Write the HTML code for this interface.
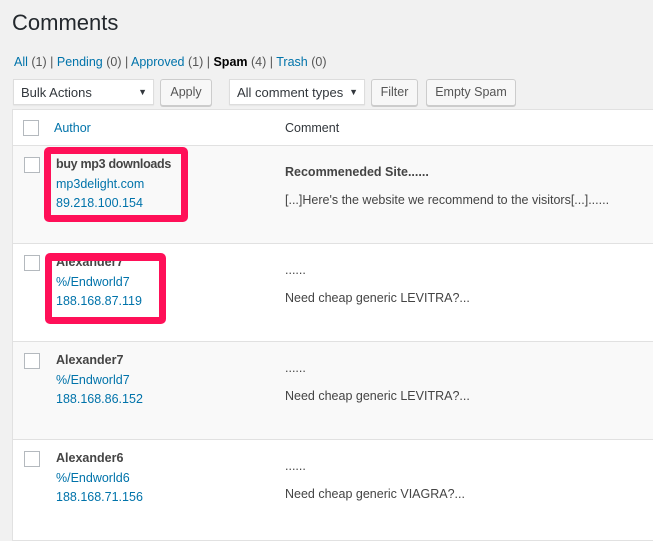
<!DOCTYPE html>
<html><head><style>
body{margin:0;width:653px;height:527px;overflow:hidden;background:#f1f1f1;font-family:"Liberation Sans",sans-serif;font-size:12.5px;color:#444;position:relative}
.a{position:absolute;white-space:nowrap}
a,.l{color:#0073aa}
.sel{position:absolute;height:26px;background:#fff;border:1px solid #ddd;box-shadow:0 1px 1px rgba(0,0,0,.05);box-sizing:border-box;padding:5px 7px;font-size:13px;color:#32373c;white-space:nowrap}
.sel:after{content:"▼";position:absolute;right:6px;top:7px;font-size:9px}
.btn{position:absolute;height:27px;background:#f7f7f7;border:1px solid #ccc;border-radius:3px;box-sizing:border-box;padding:5px 0;text-align:center;color:#555;box-shadow:0 1px 0 #ccc;white-space:nowrap}
.tbl{position:absolute;left:12px;top:109px;width:660px;height:430px;background:#fff;border:1px solid #e1e1e1}
.row{position:absolute;left:13px;width:660px;border-top:1px solid #e1e1e1;height:97px}
.cb{position:absolute;width:14px;height:14px;border:1px solid #b4b9be;background:#fff}
.red{position:absolute;border:7px solid #ff1058;border-radius:5px;box-sizing:border-box}
</style></head><body>
<div class="a" style="left:12px;top:10px;font-size:22px;color:#23282d">Comments</div>
<div class="a" style="left:14px;top:55px;color:#555"><span class="l">All</span> (1) | <span class="l">Pending</span> (0) | <span class="l">Approved</span> (1) | <b style="color:#000">Spam</b> (4) | <span class="l">Trash</span> (0)</div>
<div class="sel" style="left:13px;top:79px;width:141px">Bulk Actions</div>
<div class="btn" style="left:160px;top:79px;width:52px">Apply</div>
<div class="sel" style="left:229px;top:79px;width:136px">All comment types</div>
<div class="btn" style="left:371px;top:79px;width:47px">Filter</div>
<div class="btn" style="left:426px;top:79px;width:90px">Empty Spam</div>
<div class="tbl"></div>
<div class="cb" style="left:23px;top:120px"></div>
<div class="a l" style="left:54px;top:121px">Author</div>
<div class="a" style="left:285px;top:121px;color:#32373c">Comment</div>
<div class="row" style="top:145px;background:#f9f9f9"></div>
<div class="row" style="top:243px;background:#fff"></div>
<div class="row" style="top:341px;background:#f9f9f9"></div>
<div class="row" style="top:439px;background:#fff;height:100px"></div>

<div class="cb" style="left:24px;top:157px"></div>
<div class="a" style="left:56px;top:157px;font-weight:bold;letter-spacing:-0.3px">buy mp3 downloads</div>
<div class="a l" style="left:56px;top:177px">mp3delight.com</div>
<div class="a l" style="left:56px;top:196px">89.218.100.154</div>
<div class="a" style="left:285px;top:165px;font-weight:bold">Recommeneded Site......</div>
<div class="a" style="left:285px;top:193px">[...]Here's the website we recommend to the visitors[...]......</div>

<div class="cb" style="left:24px;top:255px"></div>
<div class="a" style="left:56px;top:255px;font-weight:bold">Alexander7</div>
<div class="a l" style="left:56px;top:275px">%/Endworld7</div>
<div class="a l" style="left:56px;top:294px">188.168.87.119</div>
<div class="a" style="left:285px;top:263px">......</div>
<div class="a" style="left:285px;top:291px">Need cheap generic LEVITRA?...</div>

<div class="cb" style="left:24px;top:353px"></div>
<div class="a" style="left:56px;top:353px;font-weight:bold">Alexander7</div>
<div class="a l" style="left:56px;top:373px">%/Endworld7</div>
<div class="a l" style="left:56px;top:392px">188.168.86.152</div>
<div class="a" style="left:285px;top:361px">......</div>
<div class="a" style="left:285px;top:389px">Need cheap generic LEVITRA?...</div>

<div class="cb" style="left:24px;top:451px"></div>
<div class="a" style="left:56px;top:451px;font-weight:bold">Alexander6</div>
<div class="a l" style="left:56px;top:471px">%/Endworld6</div>
<div class="a l" style="left:56px;top:490px">188.168.71.156</div>
<div class="a" style="left:285px;top:459px">......</div>
<div class="a" style="left:285px;top:487px">Need cheap generic VIAGRA?...</div>

<div class="red" style="left:44px;top:147px;width:144px;height:75px"></div>
<div class="red" style="left:45px;top:253px;width:121px;height:71px;border-top-width:8px"></div>
</body></html>
